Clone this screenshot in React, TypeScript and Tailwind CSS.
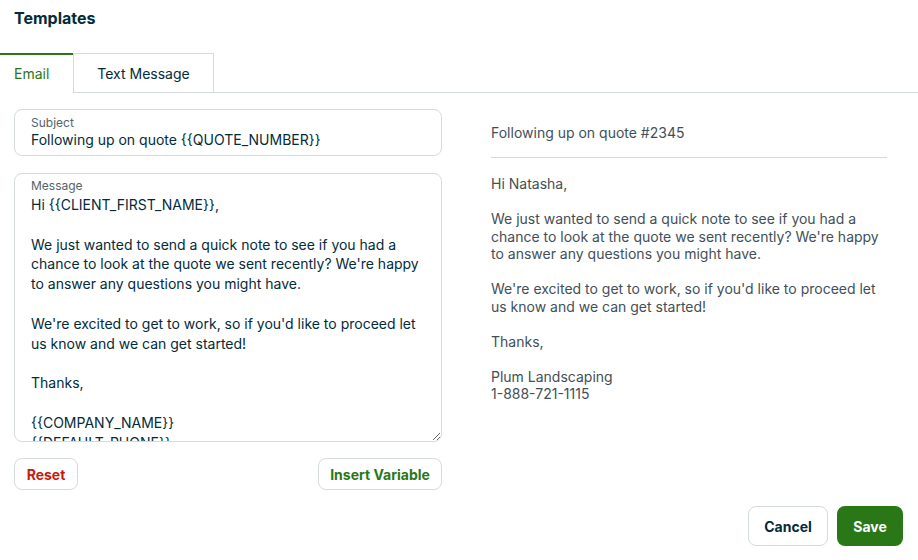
import { useState } from "react";

const MESSAGE = `Hi {{CLIENT_FIRST_NAME}},

We just wanted to send a quick note to see if you had a chance to look at the quote we sent recently? We're happy to answer any questions you might have.

We're excited to get to work, so if you'd like to proceed let us know and we can get started!

Thanks,

{{COMPANY_NAME}}
{{DEFAULT_PHONE}}`;

const PREVIEW = [
  "Hi Natasha,",
  "",
  "We just wanted to send a quick note to see if you had a chance to look at the quote we sent recently? We're happy to answer any questions you might have.",
  "",
  "We're excited to get to work, so if you'd like to proceed let us know and we can get started!",
  "",
  "Thanks,",
  "",
  "Plum Landscaping\n1-888-721-1115",
];

export default function App() {
  const [tab, setTab] = useState("email");

  return (
    <div className="min-h-[560px] bg-white font-['Inter',sans-serif] text-[#032b3a]">
      <h1 className="px-[14px] pt-[6px] text-[16px] font-bold leading-6">Templates</h1>

      <div className="mt-[23px] flex h-10 text-[14px]">
        <button
          onClick={() => setTab("email")}
          className={
            tab === "email"
              ? "w-[73px] border-t-2 border-[#2a7718] pb-[2px] pl-[14px] text-left text-[#2a7718]"
              : "w-[73px] border border-[#d5dbdd] pl-[14px] text-left"
          }
        >
          Email
        </button>
        <button
          onClick={() => setTab("sms")}
          className={
            tab === "sms"
              ? "w-[141px] border-t-2 border-[#2a7718] pb-[2px] text-center text-[#2a7718]"
              : "w-[141px] border border-[#d5dbdd] text-center"
          }
        >
          Text Message
        </button>
        <div className="flex-1 border-b border-[#d5dbdd]" />
      </div>

      <div className="mt-4 flex px-[14px]">
        <div className="w-[428px]">
          <div className="rounded-lg border border-[#d5dbdd] px-4 pb-[5px] pt-[6px]">
            <div className="text-[12px] leading-[14px] text-[#55636b]">Subject</div>
            <div className="text-[14px] leading-5">Following up on quote {"{{QUOTE_NUMBER}}"}</div>
          </div>

          <div className="relative mt-[17px]">
            <span className="absolute left-[17px] top-[6px] text-[12px] leading-[14px] text-[#55636b]">
              Message
            </span>
            <textarea
              defaultValue={MESSAGE}
              className="block h-[269px] w-full resize-y rounded-lg border border-[#d5dbdd] px-4 pt-[21px] text-[14px] leading-[19.8px] text-[#032b3a] outline-none [scrollbar-width:none]"
            />
          </div>

          <div className="mt-4 flex justify-between">
            <button className="h-8 w-16 rounded-lg border border-[#d5dbdd] text-[14px] font-bold text-[#c81a0b]">
              Reset
            </button>
            <button className="h-8 w-[124px] rounded-lg border border-[#d5dbdd] text-[14px] font-bold text-[#2a7718]">
              Insert Variable
            </button>
          </div>
        </div>

        <div className="ml-[49px] w-[396px] text-[14px] text-[#424f57]">
          <div className="border-b border-[#d5dbdd] pb-[14px] pt-[14px] leading-5">
            Following up on quote #2345
          </div>
          <div className="pt-[17px] leading-[17.5px]">
            {PREVIEW.map((p, i) => (
              <p key={i} className="min-h-[17.5px] whitespace-pre-line">
                {p}
              </p>
            ))}
          </div>
        </div>
      </div>

      <div className="mt-4 flex justify-end gap-[9px] pr-[15px]">
        <button className="h-10 w-20 rounded-lg border border-[#d5dbdd] text-[14px] font-bold">Cancel</button>
        <button className="h-10 w-[66px] rounded-lg bg-[#2a7718] text-[14px] font-bold text-white">Save</button>
      </div>
    </div>
  );
}
